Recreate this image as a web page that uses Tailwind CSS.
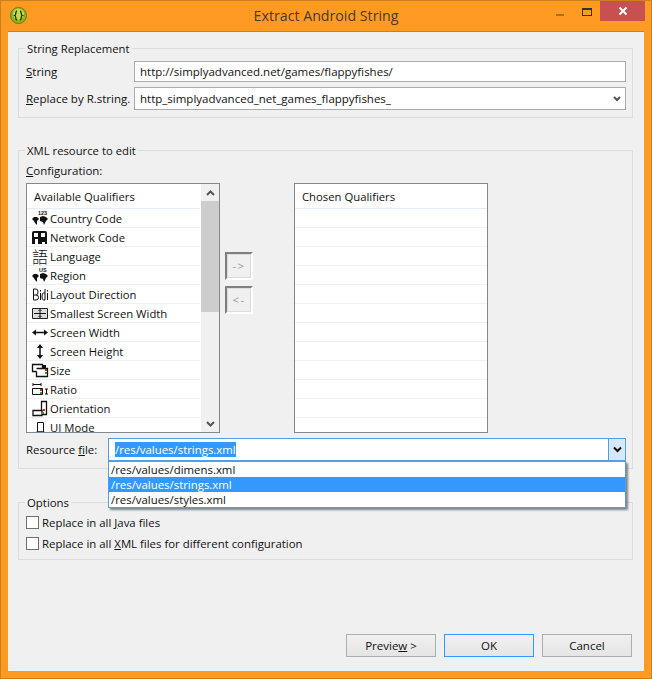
<!DOCTYPE html>
<html lang="en">
<head>
<meta charset="UTF-8">
<title>Extract Android String</title>
<script src="https://cdn.jsdelivr.net/npm/@tailwindcss/browser@4"></script>
</head>
<body class="bg-[#ff9a22]">
<div class="w-[652px] h-[679px] flex flex-col bg-[#ff9a22] border border-[#c9801f] font-['Open_Sans','Liberation_Sans',sans-serif] text-[11.5px] leading-[15px] text-[#111] overflow-hidden">

  <!-- title bar -->
  <div class="h-[30px] shrink-0 flex relative">
    <svg class="absolute left-[9px] top-[6px]" width="17" height="17" viewBox="0 0 17 17">
      <circle cx="8.5" cy="8.5" r="8" fill="#8fb51c" stroke="#5f7d10"/>
      <circle cx="8.5" cy="7" r="5.5" fill="#c3dc45"/>
      <path d="M7 4C5 4 6.500 8 4.800 8.500C6.500 9 5 13 7 13M10 4C12 4 10.500 8 12.200 8.500C10.500 9 12 13 10 13" fill="none" stroke="#223" stroke-width="1.300"/>
    </svg>
    <div class="flex-1 text-center text-[14.2px] leading-[30px] text-[#4a3a2a]">Extract Android String</div>
    <div class="absolute left-[555px] top-[13px] w-[8px] h-[2px] bg-[#a8702a]"></div>
    <div class="absolute left-[581px] top-[7px] w-[10px] h-[8px] border border-t-2 border-[#333]"></div>
    <div class="absolute left-[599px] top-0 w-[45px] h-[20px] bg-[#c75050] flex items-center justify-center">
      <svg width="10" height="10" viewBox="0 0 10 10"><path d="M1.500 1.500L8.500 8.500M8.500 1.500L1.500 8.500" stroke="#fff" stroke-width="2"/></svg>
    </div>
  </div>

  <!-- client area -->
  <div class="w-[636px] h-[640px] ml-[7px] bg-[#f0f0f0] border-t border-[#c9801f] pl-[10px] pt-[16px] flex flex-col relative">

    <!-- String Replacement -->
    <div class="w-[615px] h-[70px] shrink-0 border border-[#dcdcdc] relative pl-[7px] pt-[12px] flex flex-col gap-[5px]">
      <div class="absolute left-[6px] top-[-8px] px-[2px] bg-[#f0f0f0] text-[11.3px]">String Replacement</div>
      <div class="flex items-center h-[21px]">
        <div class="w-[108px]"><u>S</u>tring</div>
        <div class="w-[492px] h-[21px] bg-white border border-[#ababab] pl-[5px] leading-[19px]">http://simplyadvanced.net/games/flappyfishes/</div>
      </div>
      <div class="flex items-center h-[23px]">
        <div class="w-[108px] whitespace-nowrap"><u>R</u>eplace by R.string.</div>
        <div class="w-[492px] h-[23px] bg-white border border-[#ababab] pl-[5px] leading-[20px] flex justify-between items-center">
          <span>http_simplyadvanced_net_games_flappyfishes_</span>
          <svg class="mr-[4px]" width="8" height="6" viewBox="0 0 8 6"><path d="M1 1L4 4L7 1" fill="none" stroke="#555" stroke-width="2"/></svg>
        </div>
      </div>
    </div>

    <!-- XML resource to edit -->
    <div class="w-[615px] h-[319px] shrink-0 mt-[32px] border border-[#dcdcdc] relative pl-[7px] pt-[13px]">
      <div class="absolute left-[6px] top-[-8px] px-[2px] bg-[#f0f0f0] text-[11.3px]">XML resource to edit</div>
      <div class="h-[15px] mt-[-1px]"><u>C</u>onfiguration:</div>
      <div class="flex mt-[5px] h-[250px] text-[11.3px]">

        <!-- available qualifiers -->
        <div class="w-[194px] h-[250px] bg-white border border-[#828790] flex overflow-hidden">
          <div class="w-[174px] overflow-hidden">
            <div class="h-[25px] border-b border-[#e4edf8] pl-[7px] leading-[25px]">Available Qualifiers</div>
            <div class="h-[19px] border-b border-[#f0f0f0] flex items-center pl-[4px] gap-[1px]">
              <svg width="18" height="17" viewBox="0 0 18 17"><text x="7" y="5" font-size="5.500" font-family="Liberation Sans" font-weight="bold" fill="#111">123</text><path d="M1 9L3 7L6 7L8 9L6 11L6 15L4 13L3 11ZM9 7L12 6L15 7L17 9L15 11L14 13L13 15L12 12L9 11Z" fill="#111"/></svg>
              <span>Country Code</span>
            </div>
            <div class="h-[19px] border-b border-[#f0f0f0] flex items-center pl-[4px] gap-[1px]">
              <svg width="18" height="17" viewBox="0 0 18 17"><path d="M3 2H14Q16 2 16 4V15H1V4Q1 2 3 2Z" fill="#111"/><path d="M3 4H7V8H3ZM10 4H14V8H10ZM4 10H7V15H4ZM11 13H14V15H11Z" fill="#fff"/></svg>
              <span>Network Code</span>
            </div>
            <div class="h-[19px] border-b border-[#f0f0f0] flex items-center pl-[4px] gap-[1px]">
              <div class="w-[18px] text-center text-[16px] leading-[17px] font-['Noto_Sans_CJK_TC',sans-serif] font-light">語</div>
              <span>Language</span>
            </div>
            <div class="h-[19px] border-b border-[#f0f0f0] flex items-center pl-[4px] gap-[1px]">
              <svg width="18" height="17" viewBox="0 0 18 17"><text x="8" y="5" font-size="5.500" font-family="Liberation Sans" font-weight="bold" fill="#111">US</text><path d="M1 9L3 7L6 7L8 9L6 11L6 15L4 13L3 11ZM9 7L12 6L15 7L17 9L15 11L14 13L13 15L12 12L9 11Z" fill="#111"/></svg>
              <span>Region</span>
            </div>
            <div class="h-[19px] border-b border-[#f0f0f0] flex items-center pl-[4px] gap-[1px]">
              <svg width="18" height="17" viewBox="0 0 18 17"><path d="M2.500 3V14H5Q7.500 14 7.500 11.500T5 9H2.500M5 9Q7 9 7 6T5 3H2.500M9.500 7V14M9.500 4V5.500M16.500 7V14M16.500 4V5.500M14 3V14H12.500Q11 14 11 11V10Q11 7 12.500 7H14" fill="none" stroke="#111"/></svg>
              <span>Layout Direction</span>
            </div>
            <div class="h-[19px] border-b border-[#f0f0f0] flex items-center pl-[4px] gap-[1px]">
              <svg width="18" height="17" viewBox="0 0 18 17"><path d="M1.500 3.500H16.500V13.500H1.500Z" fill="#ddd" stroke="#222"/><path d="M3 8.500H15M9 4.500V12.500M7.500 6L9 4.500L10.500 6M7.500 11L9 12.500L10.500 11" fill="none" stroke="#111"/></svg>
              <span>Smallest Screen Width</span>
            </div>
            <div class="h-[19px] border-b border-[#f0f0f0] flex items-center pl-[4px] gap-[1px]">
              <svg width="18" height="17" viewBox="0 0 18 17"><path d="M4 8.500H14" stroke="#111" stroke-width="1.500"/><path d="M1 8.500L5 5.500V11.500ZM17 8.500L13 5.500V11.500Z" fill="#111"/></svg>
              <span>Screen Width</span>
            </div>
            <div class="h-[19px] border-b border-[#f0f0f0] flex items-center pl-[4px] gap-[1px]">
              <svg width="18" height="17" viewBox="0 0 18 17"><path d="M9 4V13" stroke="#111" stroke-width="1.500"/><path d="M9 1L6 5H12ZM9 16L6 12H12Z" fill="#111"/></svg>
              <span>Screen Height</span>
            </div>
            <div class="h-[19px] border-b border-[#f0f0f0] flex items-center pl-[4px] gap-[1px]">
              <svg width="18" height="17" viewBox="0 0 18 17"><path d="M1.500 2.500H11.500V9.500H1.500Z" fill="none" stroke="#111" stroke-width="1.300"/><path d="M5.500 6.500H16.500V14.500H5.500V9.500" fill="#fff" stroke="#111" stroke-width="1.300"/><path d="M12 3H15V6H12Z" fill="#111"/><path d="M14 7H16V9H14Z" fill="#c22"/><path d="M14 10H16V12H14Z" fill="#2a2"/></svg>
              <span>Size</span>
            </div>
            <div class="h-[19px] border-b border-[#f0f0f0] flex items-center pl-[4px] gap-[1px]">
              <svg width="18" height="17" viewBox="0 0 18 17"><path d="M2 3.500H10M2 2V5M10 2V5M14 8H17M15.500 8V13M14 13H17" fill="none" stroke="#111"/><path d="M1.500 7.500H11.500V13.500H1.500Z" fill="#fff" stroke="#111"/><path d="M9 8H11V10H9Z" fill="#c22"/><path d="M9 11H11V13H9Z" fill="#2a2"/></svg>
              <span>Ratio</span>
            </div>
            <div class="h-[19px] border-b border-[#f0f0f0] flex items-center pl-[4px] gap-[1px]">
              <svg width="18" height="17" viewBox="0 0 18 17"><path d="M10.500 1.500H15.500V14.500H10.500Z" fill="#fff" stroke="#111" stroke-width="1.300"/><path d="M2 10.500H11V15.500H2Z" fill="#fff" stroke="#111" stroke-width="1.300"/><path d="M12 9H14V11H12Z" fill="#c22"/><path d="M11 12H13V14H11Z" fill="#2a2"/></svg>
              <span>Orientation</span>
            </div>
            <div class="h-[19px] flex items-center pl-[4px] gap-[1px]">
              <svg width="18" height="17" viewBox="0 0 18 17"><path d="M6.500 3.500H12.500V13H6.500Z" fill="#fff" stroke="#111"/><path d="M2 15L6 13H13L16 15V17H2Z" fill="#fff" stroke="#111"/><path d="M8 13H11V15H8Z" fill="#2a2"/></svg>
              <span>UI Mode</span>
            </div>
          </div>
          <div class="w-[18px] ml-[1px] bg-[#f0f0f0] flex flex-col relative">
            <div class="h-[17px] flex items-center justify-center">
              <svg width="9" height="6" viewBox="0 0 9 6"><path d="M1 5L4.500 1.500L8 5" fill="none" stroke="#555" stroke-width="2"/></svg>
            </div>
            <div class="h-[111px] bg-[#cdcdcd]"></div>
            <div class="mt-auto h-[17px] flex items-center justify-center">
              <svg width="9" height="6" viewBox="0 0 9 6"><path d="M1 1L4.500 4.500L8 1" fill="none" stroke="#555" stroke-width="2"/></svg>
            </div>
          </div>
        </div>

        <!-- move buttons -->
        <div class="w-[74px] flex flex-col pl-[5px] pt-[69px] gap-[6px]">
          <div class="w-[28px] h-[28px] border-2 border-t-[#7f7f7f] border-l-[#7f7f7f] border-r-white border-b-white bg-[#f0f0f0] flex items-center justify-center text-[#999] tracking-[1.5px]"><div class="w-[24px] h-[24px] border border-[#dcdcdc] text-center leading-[21px]">-&gt;</div></div>
          <div class="w-[28px] h-[28px] border-2 border-t-[#7f7f7f] border-l-[#7f7f7f] border-r-white border-b-white bg-[#f0f0f0] flex items-center justify-center text-[#999] tracking-[1.5px]"><div class="w-[24px] h-[24px] border border-[#dcdcdc] text-center leading-[21px]">&lt;-</div></div>
        </div>

        <!-- chosen qualifiers -->
        <div class="w-[194px] h-[250px] bg-white border border-[#828790] overflow-hidden">
          <div class="h-[25px] border-b border-[#e4edf8] pl-[7px] leading-[25px]">Chosen Qualifiers</div>
          <div class="h-[19px] border-b border-[#f0f0f0]"></div>
          <div class="h-[19px] border-b border-[#f0f0f0]"></div>
          <div class="h-[19px] border-b border-[#f0f0f0]"></div>
          <div class="h-[19px] border-b border-[#f0f0f0]"></div>
          <div class="h-[19px] border-b border-[#f0f0f0]"></div>
          <div class="h-[19px] border-b border-[#f0f0f0]"></div>
          <div class="h-[19px] border-b border-[#f0f0f0]"></div>
          <div class="h-[19px] border-b border-[#f0f0f0]"></div>
          <div class="h-[19px] border-b border-[#f0f0f0]"></div>
          <div class="h-[19px] border-b border-[#f0f0f0]"></div>
          <div class="h-[19px] border-b border-[#f0f0f0]"></div>
        </div>
      </div>

      <!-- resource file -->
      <div class="flex items-center mt-[5px] h-[23px] text-[11.4px]">
        <div class="w-[82px]">Resource <u>f</u>ile:</div>
        <div class="w-[518px] h-[23px] bg-white border border-[#569de5] flex relative">
          <div class="flex-1 pl-[6px] pt-[3px]"><span class="bg-[#3399ff] text-white inline-block leading-[15px]">/res/values/strings.xml</span></div>
          <div class="w-[17px] bg-[#d5e8fc] border-l border-[#569de5] flex items-center justify-center">
            <svg width="9" height="7" viewBox="0 0 9 7"><path d="M1 1.500L4.500 5L8 1.500" fill="none" stroke="#111" stroke-width="2"/></svg>
          </div>
          <!-- open dropdown -->
          <div class="absolute left-[-1px] top-[22px] w-[518px] h-[47px] bg-white border border-[#569de5] shadow-[2px_2px_2px_rgba(0,0,0,0.45)] z-10">
            <div class="h-[15px] pl-[2px]">/res/values/dimens.xml</div>
            <div class="h-[15px] pl-[2px] bg-[#3399ff] text-white">/res/values/strings.xml</div>
            <div class="h-[15px] pl-[2px]">/res/values/styles.xml</div>
          </div>
        </div>
      </div>
    </div>

    <!-- Options -->
    <div class="w-[615px] h-[58px] shrink-0 mt-[33px] border border-[#dcdcdc] relative pl-[7px] pt-[13px] flex flex-col gap-[8px] text-[11.4px]">
      <div class="absolute left-[6px] top-[-8px] px-[2px] bg-[#f0f0f0]">Options</div>
      <div class="flex items-center gap-[3px] h-[13px]">
        <div class="w-[13px] h-[13px] bg-white border border-[#707070]"></div>
        <span>Replace in all <u>J</u>ava files</span>
      </div>
      <div class="flex items-center gap-[3px] h-[13px]">
        <div class="w-[13px] h-[13px] bg-white border border-[#707070]"></div>
        <span>Replace in all <u>X</u>ML files for different configuration</span>
      </div>
    </div>

    <!-- bottom buttons -->
    <div class="flex gap-[8px] ml-[328px] mt-[74px]">
      <div class="w-[90px] h-[23px] border border-[#adadad] bg-gradient-to-b from-[#f0f0f0] to-[#e5e5e5] text-center leading-[21px]">Previe<u>w</u> &gt;</div>
      <div class="w-[90px] h-[23px] border border-[#3399ff] bg-gradient-to-b from-[#f0f0f0] to-[#e5e5e5] text-center leading-[21px]">OK</div>
      <div class="w-[90px] h-[23px] border border-[#adadad] bg-gradient-to-b from-[#f0f0f0] to-[#e5e5e5] text-center leading-[21px]">Cancel</div>
    </div>
  </div>
</div>
</body>
</html>
